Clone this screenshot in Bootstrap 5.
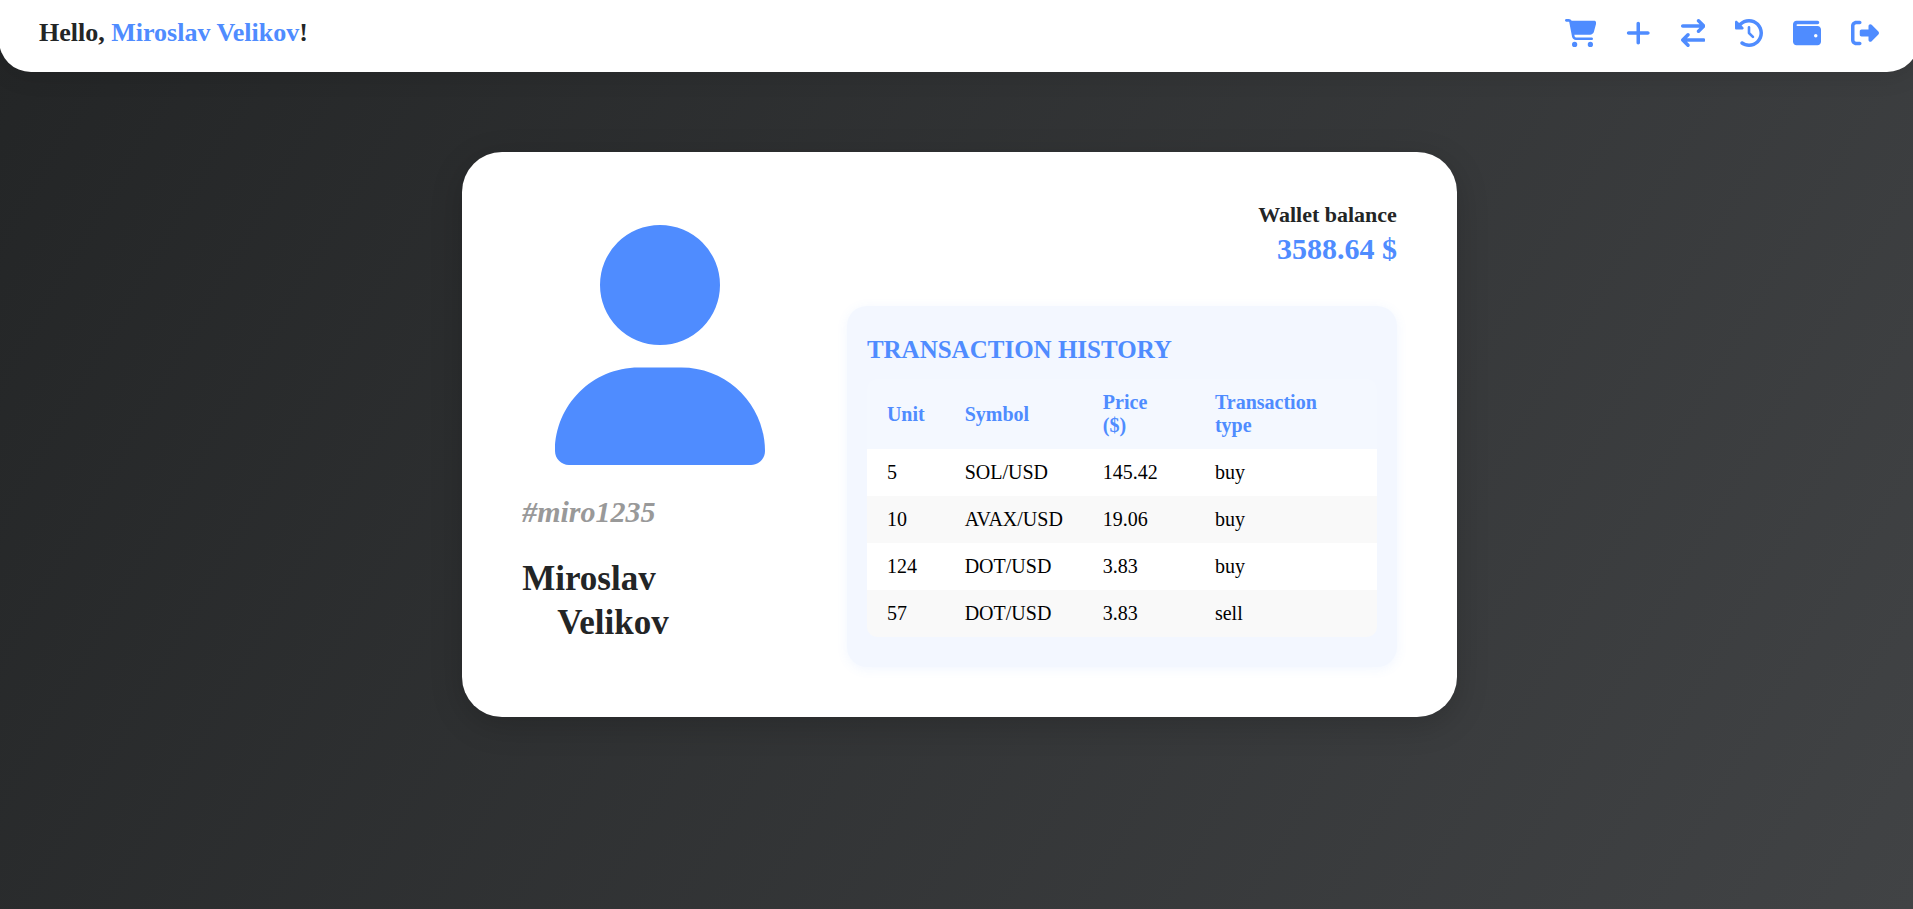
<!DOCTYPE html>
<html lang="en">
<head>
<meta charset="utf-8">
<meta name="viewport" content="width=device-width, initial-scale=1">
<title>Profile</title>
<link href="https://cdn.jsdelivr.net/npm/bootstrap@5.3.0/dist/css/bootstrap.min.css" rel="stylesheet">
<style>
  :root { --accent: #4f8cff; --ink: #232526; }
  body {
    font-family: "Liberation Serif", "Times New Roman", serif;
    line-height: normal;
    color: var(--ink);
    background: linear-gradient(120deg, #232526, #414345) fixed;
    overflow-x: hidden;
  }
  svg { display: block; fill: currentColor; }
  .accent { color: var(--accent); }
  .topbar {
    margin: 0 -6px 0 -1px;
    padding: 19px 40px 25px;
    border-radius: 0 0 32px 32px;
    box-shadow: 0 4px 24px rgba(0, 0, 0, .1);
  }
  .greeting { font-size: 26px; line-height: 28px; }
  .actions { gap: 30px; }
  .actions svg { height: 28px; }
  main { padding: 80px 0 80px 6px; }
  .profile {
    width: 52vw;
    padding: 50px 60px;
    gap: 50px;
    border-radius: 40px;
    box-shadow: 0 8px 32px rgba(0, 0, 0, .18);
  }
  .identity { flex: 1 1 0; }
  .activity { flex: 0 0 550px; }
  .avatar { height: 240px; margin-bottom: 30px; }
  .handle { font-size: 30px; line-height: 34px; margin-bottom: 28px; color: #999; }
  .fullname { font-size: 35px; line-height: 44px; }
  .fullname .surname { padding-left: 35px; }
  .balance { margin-bottom: 40px; }
  .balance-label { font-size: 22px; line-height: 25px; margin-bottom: 5px; }
  .balance-sum { font-size: 30px; line-height: 34px; }
  .history {
    padding: 30px 20px;
    border-radius: 20px;
    background: #f3f7ff;
    box-shadow: 0 2px 12px rgba(79, 140, 255, .08);
  }
  .history-title { font-size: 25px; line-height: 28px; margin-bottom: 15px; }
  .trades {
    font-size: 20px;
    border-radius: 10px;
    overflow: hidden;
    --bs-table-bg: #fff;
  }
  .trades > :not(caption) > * > * { padding: 12px 20px; border: 0; color: #000; line-height: 23px; }
  .trades > thead > tr > th { background: #f4f8ff; color: var(--accent); vertical-align: middle; }
  .trades > tbody > tr:nth-child(even) > td { background: #f9f9f9; }
  @media (max-width: 1600px) {
    .profile { width: 92%; max-width: 995px; }
  }
  @media (max-width: 991px) {
    .profile { flex-direction: column; padding: 30px 20px; }
    .activity { flex: none; width: 100%; }
    .topbar { padding-left: 20px; padding-right: 28px; }
    .actions { gap: 16px; }
  }
</style>
</head>
<body class="min-vh-100">
<header class="topbar bg-white d-flex flex-wrap justify-content-between align-items-center">
  <h1 class="greeting fw-bold mb-0">Hello, <span class="accent">Miroslav Velikov</span>!</h1>
  <nav class="actions d-flex align-items-center" aria-label="Main">
    <a href="#" class="accent" aria-label="Shop"><svg viewBox="0 0 576 512"><path d="M0 24C0 10.7 10.7 0 24 0H69.5c22 0 41.5 12.8 50.6 32h411c26.3 0 45.5 25 38.6 50.4l-41 152.3c-8.5 31.4-37 53.3-69.5 53.3H170.7l5.4 28.5c2.2 11.3 12.1 19.5 23.6 19.5H488c13.3 0 24 10.7 24 24s-10.7 24-24 24H199.7c-34.6 0-64.3-24.6-70.7-58.5L77.4 54.5c-.7-3.8-4-6.5-7.9-6.5H24C10.7 48 0 37.3 0 24zM128 464a48 48 0 1 1 96 0 48 48 0 1 1 -96 0zm336-48a48 48 0 1 1 0 96 48 48 0 1 1 0-96z"/></svg></a>
    <a href="#" class="accent" aria-label="Add"><svg viewBox="0 0 448 512"><path d="M256 80c0-17.7-14.3-32-32-32s-32 14.3-32 32V224H48c-17.7 0-32 14.3-32 32s14.3 32 32 32H192V432c0 17.7 14.3 32 32 32s32-14.3 32-32V288H400c17.7 0 32-14.3 32-32s-14.3-32-32-32H256V80z"/></svg></a>
    <a href="#" class="accent" aria-label="Exchange"><svg viewBox="0 0 448 512"><path d="M438.6 150.6c12.5-12.5 12.5-32.8 0-45.3l-96-96c-12.5-12.5-32.8-12.5-45.3 0s-12.5 32.8 0 45.3L338.7 96H32C14.3 96 0 110.3 0 128s14.3 32 32 32H338.7l-41.4 41.4c-12.5 12.5-12.5 32.8 0 45.3s32.8 12.5 45.3 0l96-96zm-333.3 352c12.5 12.5 32.8 12.5 45.3 0s12.5-32.8 0-45.3L109.3 416H416c17.7 0 32-14.3 32-32s-14.3-32-32-32H109.3l41.4-41.4c12.5-12.5 12.5-32.8 0-45.3s-32.8-12.5-45.3 0l-96 96c-12.5 12.5-12.5 32.8 0 45.3l96 96z"/></svg></a>
    <a href="#" class="accent" aria-label="History"><svg viewBox="0 0 512 512"><path d="M75 75L41 41C25.9 25.9 0 36.6 0 57.9V168c0 13.3 10.7 24 24 24H134.1c21.4 0 32.1-25.9 17-41l-30.8-30.8C155 85.5 203 64 256 64c106 0 192 86 192 192s-86 192-192 192c-40.8 0-78.6-12.7-109.7-34.4c-14.5-10.1-34.4-6.6-44.6 7.9s-6.6 34.4 7.9 44.6C151.2 495 201.7 512 256 512c141.4 0 256-114.6 256-256S397.4 0 256 0C185.3 0 121.3 28.7 75 75zm181 53c-13.3 0-24 10.7-24 24V256c0 6.4 2.5 12.5 7 17l72 72c9.4 9.4 24.6 9.4 33.9 0s9.4-24.6 0-33.9l-65-65V152c0-13.3-10.7-24-24-24z"/></svg></a>
    <a href="#" class="accent" aria-label="Wallet"><svg viewBox="0 0 512 512"><path d="M64 32C28.7 32 0 60.7 0 96V416c0 35.3 28.7 64 64 64H448c35.3 0 64-28.7 64-64V192c0-35.3-28.7-64-64-64H80c-8.8 0-16-7.2-16-16s7.2-16 16-16H448c17.7 0 32-14.3 32-32s-14.3-32-32-32H64zM416 272a32 32 0 1 1 0 64 32 32 0 1 1 0-64z"/></svg></a>
    <a href="#" class="accent" aria-label="Log out"><svg viewBox="0 0 512 512"><path d="M377.9 105.9L500.7 228.7c7.2 7.2 11.3 17.1 11.3 27.3s-4.1 20.1-11.3 27.3L377.9 406.1c-6.4 6.4-15 9.9-24 9.9c-18.7 0-33.9-15.2-33.9-33.9l0-62.1-128 0c-17.7 0-32-14.3-32-32l0-64c0-17.7 14.3-32 32-32l128 0 0-62.1c0-18.7 15.2-33.9 33.9-33.9c9 0 17.6 3.6 24 9.9zM160 96L96 96c-17.7 0-32 14.3-32 32l0 256c0 17.7 14.3 32 32 32l64 0c17.7 0 32 14.3 32 32s-14.3 32-32 32l-64 0c-53 0-96-43-96-96L0 128C0 75 43 32 96 32l64 0c17.7 0 32 14.3 32 32s-14.3 32-32 32z"/></svg></a>
  </nav>
</header>

<main>
  <article class="profile bg-white mx-auto d-flex align-items-center">
    <section class="identity">
      <svg class="avatar accent mx-auto" viewBox="0 0 448 512" aria-hidden="true"><path d="M224 256A128 128 0 1 0 224 0a128 128 0 1 0 0 256zm-45.7 48C79.8 304 0 383.8 0 482.3C0 498.7 13.3 512 29.7 512H418.3c16.4 0 29.7-13.3 29.7-29.7C448 383.8 368.2 304 269.7 304H178.3z"/></svg>
      <p class="handle fw-bold fst-italic">#miro1235</p>
      <h2 class="fullname fw-bold mb-0">Miroslav<br><span class="surname">Velikov</span></h2>
    </section>
    <div class="activity">
      <section class="balance text-end fw-bold">
        <div class="balance-label">Wallet balance</div>
        <div class="balance-sum accent">3588.64 $</div>
      </section>
      <section class="history">
        <h3 class="history-title accent fw-bold text-uppercase">Transaction history</h3>
        <table class="table trades mb-0">
          <thead>
            <tr><th scope="col">Unit</th><th scope="col">Symbol</th><th scope="col">Price ($)</th><th scope="col">Transaction type</th></tr>
          </thead>
          <tbody>
            <tr><td>5</td><td>SOL/USD</td><td>145.42</td><td>buy</td></tr>
            <tr><td>10</td><td>AVAX/USD</td><td>19.06</td><td>buy</td></tr>
            <tr><td>124</td><td>DOT/USD</td><td>3.83</td><td>buy</td></tr>
            <tr><td>57</td><td>DOT/USD</td><td>3.83</td><td>sell</td></tr>
          </tbody>
        </table>
      </section>
    </div>
  </article>
</main>
<script src="https://cdn.jsdelivr.net/npm/bootstrap@5.3.0/dist/js/bootstrap.bundle.min.js"></script>
</body>
</html>
